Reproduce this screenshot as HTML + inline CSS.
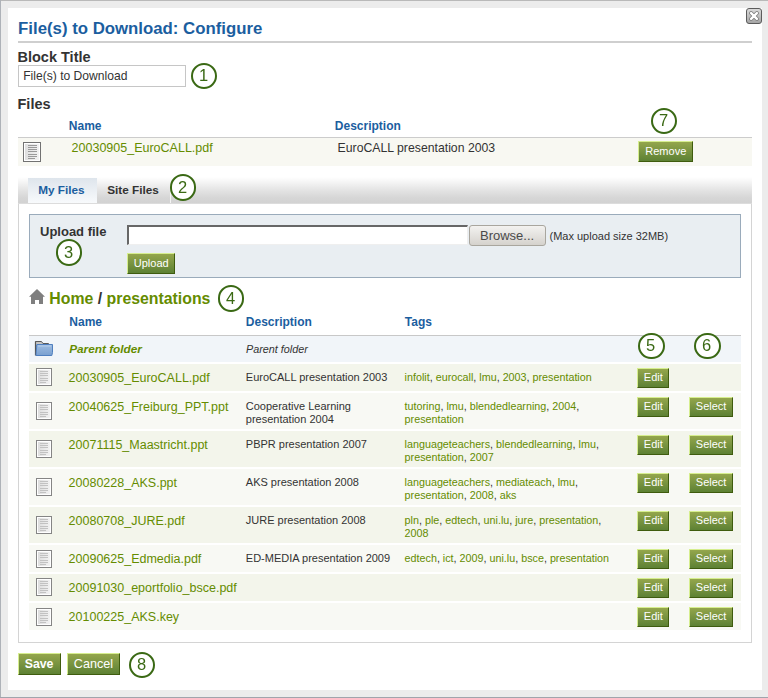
<!DOCTYPE html>
<html><head><meta charset="utf-8"><style>
html,body{margin:0;padding:0}
body{width:768px;height:698px;position:relative;overflow:hidden;background:#ececec;font-family:"Liberation Sans",sans-serif}
.t{position:absolute;white-space:nowrap}
.r{position:absolute}
.btn{position:absolute;border-style:solid;border-width:1px;border-color:#d6ee8e #3f5c0e #3f5c0e #d6ee8e;background:linear-gradient(#94a64c,#5d8134)}
.circ{position:absolute;border:2px solid #3a6914;border-radius:50%;background:#fff}
.browse{position:absolute;border:1px solid #a9a69e;border-radius:3px;background:linear-gradient(#f3f2f0,#d5d2cd)}
</style></head><body>
<div class="r" style="left:8px;top:8px;width:754px;height:682px;background:#fff"></div>
<div class="r" style="left:0px;top:0px;width:768px;height:1px;background:#b9b9b9"></div>
<div class="r" style="left:0px;top:0px;width:1px;height:698px;background:#aeb2b8"></div>
<div class="r" style="left:0px;top:697px;width:768px;height:1px;background:#a0a4ac"></div>
<svg class="r" style="left:746px;top:8px" width="16" height="16" viewBox="0 0 16 16">
<defs><linearGradient id="cg" x1="0" y1="0" x2="0" y2="1"><stop offset="0" stop-color="#dcdcdc"/><stop offset="1" stop-color="#a4a4a4"/></linearGradient></defs>
<rect x="0.5" y="0.5" width="15" height="15" rx="2.5" fill="url(#cg)" stroke="#5c5c5c" stroke-width="1"/>
<path d="M5.1 5.1 L10.9 10.9 M10.9 5.1 L5.1 10.9" stroke="#7a7a7a" stroke-width="4.0" stroke-linecap="round"/>
<path d="M5.1 5.1 L10.9 10.9 M10.9 5.1 L5.1 10.9" stroke="#fff" stroke-width="2.4" stroke-linecap="round"/>
</svg>
<div class="t" style="left:18.10px;top:21.38px;font-size:16.8px;line-height:16.8px;font-weight:bold;font-style:normal;color:#1b5e9f;">File(s) to Download: Configure</div>
<div class="r" style="left:18px;top:41px;width:734px;height:2px;background:#cfcfcf"></div>
<div class="t" style="left:17.50px;top:49.72px;font-size:14.5px;line-height:14.5px;font-weight:bold;font-style:normal;color:#333;">Block Title</div>
<div class="r" style="left:18px;top:65px;width:168px;height:22px;border:1px solid #c6c6c6;box-sizing:border-box;background:#fff"></div>
<div class="t" style="left:23.20px;top:69.95px;font-size:12.1px;line-height:12.1px;font-weight:normal;font-style:normal;color:#333;">File(s) to Download</div>
<div class="circ" style="left:190.60px;top:62.50px;width:22.60px;height:22.60px;"></div>
<div class="t" style="left:198.60px;top:66.93px;font-size:16.5px;line-height:16.5px;font-weight:normal;font-style:normal;color:#3a6914;will-change:transform;">1</div>
<div class="t" style="left:17.50px;top:96.52px;font-size:14.5px;line-height:14.5px;font-weight:bold;font-style:normal;color:#333;">Files</div>
<div class="t" style="left:68.80px;top:120.04px;font-size:12px;line-height:12px;font-weight:bold;font-style:normal;color:#1b5e9f;">Name</div>
<div class="t" style="left:334.80px;top:120.04px;font-size:12px;line-height:12px;font-weight:bold;font-style:normal;color:#1b5e9f;">Description</div>
<div class="circ" style="left:650.60px;top:107.50px;width:22.60px;height:22.60px;"></div>
<div class="t" style="left:658.60px;top:111.93px;font-size:16.5px;line-height:16.5px;font-weight:normal;font-style:normal;color:#3a6914;will-change:transform;">7</div>
<div class="r" style="left:18px;top:137px;width:734px;height:1px;background:#cccccc"></div>
<div class="r" style="left:18px;top:138px;width:734px;height:28px;background:#f8f8f2"></div>
<svg class="r" style="left:23px;top:142px" width="18" height="20" viewBox="0 0 18 20">
<defs><linearGradient id="fg23142" x1="0" y1="0" x2="1" y2="0"><stop offset="0" stop-color="#dedede"/><stop offset="1" stop-color="#f2f2f2"/></linearGradient></defs>
<rect x="0.5" y="0.5" width="17" height="19" fill="#fff" stroke="#727272"/>
<rect x="2" y="2" width="14" height="16" fill="url(#fg23142)"/>
<rect x="5" y="3" width="9" height="1" fill="#9a9a9a"/><rect x="5" y="5" width="9" height="1" fill="#9a9a9a"/><rect x="5" y="7" width="9" height="1" fill="#9a9a9a"/><rect x="5" y="9" width="9" height="1" fill="#9a9a9a"/><rect x="5" y="12" width="9" height="1" fill="#9a9a9a"/><rect x="5" y="14" width="9" height="1" fill="#9a9a9a"/><rect x="5" y="16" width="7" height="1" fill="#9a9a9a"/></svg>
<div class="t" style="left:71.60px;top:142.12px;font-size:12.5px;line-height:12.5px;font-weight:normal;font-style:normal;color:#658c00;">20030905_EuroCALL.pdf</div>
<div class="t" style="left:337.60px;top:142.03px;font-size:12.25px;line-height:12.25px;font-weight:normal;font-style:normal;color:#333;">EuroCALL presentation 2003</div>
<div class="btn" style="left:638px;top:141px;width:53px;height:19px;"></div>
<div class="t" style="left:645.30px;top:146.29px;font-size:11px;line-height:11px;font-weight:normal;font-style:normal;color:#fff;">Remove</div>
<div class="r" style="left:18px;top:177px;width:734px;height:26px;background:linear-gradient(#fff 0%,#f9f9f9 12%,#e4e4e4 50%,#d6d6d6 80%,#d2d2d2 100%)"></div>
<div class="r" style="left:18px;top:203px;width:734px;height:1px;background:#dcdcdc"></div>
<div class="r" style="left:28px;top:178px;width:69px;height:25px;background:linear-gradient(#dee5ec,#f8fafc)"></div>
<div class="r" style="left:170px;top:182px;width:1px;height:21px;background:#f4f4f4"></div>
<div class="t" style="left:38.20px;top:183.85px;font-size:11.75px;line-height:11.75px;font-weight:bold;font-style:normal;color:#1b5e9f;">My Files</div>
<div class="t" style="left:107.20px;top:183.85px;font-size:11.75px;line-height:11.75px;font-weight:bold;font-style:normal;color:#333;">Site Files</div>
<div class="circ" style="left:169.60px;top:174.40px;width:22.60px;height:22.60px;"></div>
<div class="t" style="left:177.60px;top:178.83px;font-size:16.5px;line-height:16.5px;font-weight:normal;font-style:normal;color:#3a6914;will-change:transform;">2</div>
<div class="r" style="left:18px;top:204px;width:734px;height:439px;border:1px solid #d4d4d4;border-top:none;box-sizing:border-box;border-width:0 1.5px 1.5px 1px"></div>
<div class="r" style="left:29px;top:214px;width:712px;height:64px;background:#e9eef2;border:1px solid #9aabbb;box-sizing:border-box"></div>
<div class="t" style="left:40.00px;top:225.39px;font-size:13px;line-height:13px;font-weight:bold;font-style:normal;color:#333;">Upload file</div>
<div class="circ" style="left:55.60px;top:239.40px;width:22.60px;height:22.60px;"></div>
<div class="t" style="left:63.60px;top:243.83px;font-size:16.5px;line-height:16.5px;font-weight:normal;font-style:normal;color:#3a6914;will-change:transform;">3</div>
<div class="r" style="left:127px;top:225px;width:341px;height:20px;background:#fff;border-style:solid;border-width:2px 1.5px 1.5px 2px;border-color:#676767 #efefef #efefef #676767;box-sizing:border-box"></div>
<div class="browse" style="left:469px;top:225px;width:75px;height:19px;"></div>
<div class="t" style="left:480.00px;top:228.99px;font-size:13px;line-height:13px;font-weight:normal;font-style:normal;color:#4a4a4a;">Browse...</div>
<div class="t" style="left:549.50px;top:230.69px;font-size:11px;line-height:11px;font-weight:normal;font-style:normal;color:#333;">(Max upload size 32MB)</div>
<div class="btn" style="left:127px;top:253px;width:46px;height:19px;"></div>
<div class="t" style="left:133.80px;top:258.09px;font-size:11px;line-height:11px;font-weight:normal;font-style:normal;color:#fff;">Upload</div>
<svg class="r" style="left:28px;top:288px" width="18" height="17" viewBox="0 0 18 17">
<path d="M9 1 L17 8.7 L15 8.7 L15 16 L11 16 L11 12 L7 12 L7 16 L3 16 L3 8.7 L1 8.7 Z" fill="#7f7f7f"/></svg>
<div class="t" style="left:49.30px;top:290.78px;font-size:15.85px;line-height:15.85px;font-weight:bold;font-style:normal;color:#333;"><span style="color:#658c00">Home</span> / <span style="color:#658c00">presentations</span></div>
<div class="circ" style="left:217.60px;top:285.40px;width:22.60px;height:22.60px;"></div>
<div class="t" style="left:225.60px;top:289.83px;font-size:16.5px;line-height:16.5px;font-weight:normal;font-style:normal;color:#3a6914;will-change:transform;">4</div>
<div class="t" style="left:69.30px;top:315.84px;font-size:12px;line-height:12px;font-weight:bold;font-style:normal;color:#1b5e9f;">Name</div>
<div class="t" style="left:245.80px;top:315.84px;font-size:12px;line-height:12px;font-weight:bold;font-style:normal;color:#1b5e9f;">Description</div>
<div class="t" style="left:404.80px;top:315.84px;font-size:12px;line-height:12px;font-weight:bold;font-style:normal;color:#1b5e9f;">Tags</div>
<div class="r" style="left:29px;top:335px;width:712px;height:1px;background:#c8c8c8"></div>
<div class="r" style="left:29px;top:336px;width:712px;height:26px;background:#f1f5f9"></div>
<div class="r" style="left:29px;top:364px;width:712px;height:27px;background:#f3f5eb"></div>
<div class="r" style="left:29px;top:393px;width:712px;height:36px;background:#f8f9f4"></div>
<div class="r" style="left:29px;top:431px;width:712px;height:36px;background:#f3f5eb"></div>
<div class="r" style="left:29px;top:469px;width:712px;height:36px;background:#f8f9f4"></div>
<div class="r" style="left:29px;top:507px;width:712px;height:36px;background:#f3f5eb"></div>
<div class="r" style="left:29px;top:545px;width:712px;height:27px;background:#f8f9f4"></div>
<div class="r" style="left:29px;top:574px;width:712px;height:27px;background:#f3f5eb"></div>
<div class="r" style="left:29px;top:603px;width:712px;height:27px;background:#f8f9f4"></div>
<div class="circ" style="left:638.40px;top:332.50px;width:22.60px;height:22.60px;"></div>
<div class="t" style="left:646.40px;top:336.93px;font-size:16.5px;line-height:16.5px;font-weight:normal;font-style:normal;color:#3a6914;will-change:transform;">5</div>
<div class="circ" style="left:694.40px;top:332.50px;width:22.60px;height:22.60px;"></div>
<div class="t" style="left:702.40px;top:336.93px;font-size:16.5px;line-height:16.5px;font-weight:normal;font-style:normal;color:#3a6914;will-change:transform;">6</div>
<svg class="r" style="left:34px;top:340px" width="20" height="17" viewBox="0 0 20 17">
<defs><linearGradient id="fo" x1="0" y1="0" x2="0" y2="1"><stop offset="0" stop-color="#9dbce0"/><stop offset="1" stop-color="#7aa0d0"/></linearGradient></defs>
<path d="M1.5 1.5 L7.5 1.5 L9 3.5 L14.5 3.5 L14.5 6 L1.5 6 Z" fill="#c4c4c4" stroke="#5a5a5a" stroke-width="1"/>
<path d="M1.5 1.5 L1.5 15.5" stroke="#555" stroke-width="1.2"/>
<path d="M2.8 4.5 L18.5 4.5 L18.5 12.5 L17.8 15.5 L2 15.5 Z" fill="url(#fo)" stroke="#4f7fbf" stroke-width="1"/><path d="M4 6 L17 6" stroke="#b4cdea" stroke-width="1"/>
</svg>
<div class="t" style="left:69.20px;top:343.81px;font-size:11.8px;line-height:11.8px;font-weight:bold;font-style:italic;color:#658c00;">Parent folder</div>
<div class="t" style="left:246.00px;top:343.66px;font-size:10.8px;line-height:10.8px;font-weight:normal;font-style:italic;color:#333;">Parent folder</div>
<svg class="r" style="left:36px;top:368px" width="16" height="18" viewBox="0 0 16 18">
<defs><linearGradient id="fg36368" x1="0" y1="0" x2="1" y2="0"><stop offset="0" stop-color="#dedede"/><stop offset="1" stop-color="#f2f2f2"/></linearGradient></defs>
<rect x="0.5" y="0.5" width="15" height="17" fill="#fff" stroke="#858585"/>
<rect x="2" y="2" width="12" height="14" fill="url(#fg36368)"/>
<rect x="4" y="3" width="8" height="1" fill="#c2c2c2"/><rect x="4" y="5" width="8" height="1" fill="#c2c2c2"/><rect x="4" y="7" width="8" height="1" fill="#c2c2c2"/><rect x="4" y="10" width="8" height="1" fill="#c2c2c2"/><rect x="4" y="12" width="8" height="1" fill="#c2c2c2"/><rect x="4" y="14" width="6" height="1" fill="#c2c2c2"/></svg>
<div class="t" style="left:68.60px;top:372.12px;font-size:12.5px;line-height:12.5px;font-weight:normal;font-style:normal;color:#658c00;">20030905_EuroCALL.pdf</div>
<div class="t" style="left:245.80px;top:371.89px;font-size:11px;line-height:11px;font-weight:normal;font-style:normal;color:#333;">EuroCALL presentation 2003</div>
<div class="t" style="left:404.60px;top:372.10px;font-size:10.75px;line-height:10.75px;font-weight:normal;font-style:normal;color:#333;"><span style="color:#658c00">infolit</span>, <span style="color:#658c00">eurocall</span>, <span style="color:#658c00">lmu</span>, <span style="color:#658c00">2003</span>, <span style="color:#658c00">presentation</span></div>
<div class="btn" style="left:637px;top:367.5px;width:30px;height:18.5px;"></div>
<div class="t" style="left:643.80px;top:372.19px;font-size:11px;line-height:11px;font-weight:normal;font-style:normal;color:#fff;">Edit</div>
<svg class="r" style="left:36px;top:402px" width="16" height="18" viewBox="0 0 16 18">
<defs><linearGradient id="fg36402" x1="0" y1="0" x2="1" y2="0"><stop offset="0" stop-color="#dedede"/><stop offset="1" stop-color="#f2f2f2"/></linearGradient></defs>
<rect x="0.5" y="0.5" width="15" height="17" fill="#fff" stroke="#858585"/>
<rect x="2" y="2" width="12" height="14" fill="url(#fg36402)"/>
<rect x="4" y="3" width="8" height="1" fill="#c2c2c2"/><rect x="4" y="5" width="8" height="1" fill="#c2c2c2"/><rect x="4" y="7" width="8" height="1" fill="#c2c2c2"/><rect x="4" y="10" width="8" height="1" fill="#c2c2c2"/><rect x="4" y="12" width="8" height="1" fill="#c2c2c2"/><rect x="4" y="14" width="6" height="1" fill="#c2c2c2"/></svg>
<div class="t" style="left:68.60px;top:401.12px;font-size:12.5px;line-height:12.5px;font-weight:normal;font-style:normal;color:#658c00;">20040625_Freiburg_PPT.ppt</div>
<div class="t" style="left:245.80px;top:400.89px;font-size:11px;line-height:11px;font-weight:normal;font-style:normal;color:#333;">Cooperative Learning</div>
<div class="t" style="left:245.80px;top:413.89px;font-size:11px;line-height:11px;font-weight:normal;font-style:normal;color:#333;">presentation 2004</div>
<div class="t" style="left:404.60px;top:401.10px;font-size:10.75px;line-height:10.75px;font-weight:normal;font-style:normal;color:#333;"><span style="color:#658c00">tutoring</span>, <span style="color:#658c00">lmu</span>, <span style="color:#658c00">blendedlearning</span>, <span style="color:#658c00">2004</span>,</div>
<div class="t" style="left:404.60px;top:414.10px;font-size:10.75px;line-height:10.75px;font-weight:normal;font-style:normal;color:#333;"><span style="color:#658c00">presentation</span></div>
<div class="btn" style="left:637px;top:396.5px;width:30px;height:18.5px;"></div>
<div class="t" style="left:643.80px;top:401.19px;font-size:11px;line-height:11px;font-weight:normal;font-style:normal;color:#fff;">Edit</div>
<div class="btn" style="left:689px;top:396.5px;width:42px;height:18.5px;"></div>
<div class="t" style="left:695.80px;top:401.19px;font-size:11px;line-height:11px;font-weight:normal;font-style:normal;color:#fff;">Select</div>
<svg class="r" style="left:36px;top:440px" width="16" height="18" viewBox="0 0 16 18">
<defs><linearGradient id="fg36440" x1="0" y1="0" x2="1" y2="0"><stop offset="0" stop-color="#dedede"/><stop offset="1" stop-color="#f2f2f2"/></linearGradient></defs>
<rect x="0.5" y="0.5" width="15" height="17" fill="#fff" stroke="#858585"/>
<rect x="2" y="2" width="12" height="14" fill="url(#fg36440)"/>
<rect x="4" y="3" width="8" height="1" fill="#c2c2c2"/><rect x="4" y="5" width="8" height="1" fill="#c2c2c2"/><rect x="4" y="7" width="8" height="1" fill="#c2c2c2"/><rect x="4" y="10" width="8" height="1" fill="#c2c2c2"/><rect x="4" y="12" width="8" height="1" fill="#c2c2c2"/><rect x="4" y="14" width="6" height="1" fill="#c2c2c2"/></svg>
<div class="t" style="left:68.60px;top:439.12px;font-size:12.5px;line-height:12.5px;font-weight:normal;font-style:normal;color:#658c00;">20071115_Maastricht.ppt</div>
<div class="t" style="left:245.80px;top:438.89px;font-size:11px;line-height:11px;font-weight:normal;font-style:normal;color:#333;">PBPR presentation 2007</div>
<div class="t" style="left:404.60px;top:439.10px;font-size:10.75px;line-height:10.75px;font-weight:normal;font-style:normal;color:#333;"><span style="color:#658c00">languageteachers</span>, <span style="color:#658c00">blendedlearning</span>, <span style="color:#658c00">lmu</span>,</div>
<div class="t" style="left:404.60px;top:452.10px;font-size:10.75px;line-height:10.75px;font-weight:normal;font-style:normal;color:#333;"><span style="color:#658c00">presentation</span>, <span style="color:#658c00">2007</span></div>
<div class="btn" style="left:637px;top:434.5px;width:30px;height:18.5px;"></div>
<div class="t" style="left:643.80px;top:439.19px;font-size:11px;line-height:11px;font-weight:normal;font-style:normal;color:#fff;">Edit</div>
<div class="btn" style="left:689px;top:434.5px;width:42px;height:18.5px;"></div>
<div class="t" style="left:695.80px;top:439.19px;font-size:11px;line-height:11px;font-weight:normal;font-style:normal;color:#fff;">Select</div>
<svg class="r" style="left:36px;top:478px" width="16" height="18" viewBox="0 0 16 18">
<defs><linearGradient id="fg36478" x1="0" y1="0" x2="1" y2="0"><stop offset="0" stop-color="#dedede"/><stop offset="1" stop-color="#f2f2f2"/></linearGradient></defs>
<rect x="0.5" y="0.5" width="15" height="17" fill="#fff" stroke="#858585"/>
<rect x="2" y="2" width="12" height="14" fill="url(#fg36478)"/>
<rect x="4" y="3" width="8" height="1" fill="#c2c2c2"/><rect x="4" y="5" width="8" height="1" fill="#c2c2c2"/><rect x="4" y="7" width="8" height="1" fill="#c2c2c2"/><rect x="4" y="10" width="8" height="1" fill="#c2c2c2"/><rect x="4" y="12" width="8" height="1" fill="#c2c2c2"/><rect x="4" y="14" width="6" height="1" fill="#c2c2c2"/></svg>
<div class="t" style="left:68.60px;top:477.12px;font-size:12.5px;line-height:12.5px;font-weight:normal;font-style:normal;color:#658c00;">20080228_AKS.ppt</div>
<div class="t" style="left:245.80px;top:476.89px;font-size:11px;line-height:11px;font-weight:normal;font-style:normal;color:#333;">AKS presentation 2008</div>
<div class="t" style="left:404.60px;top:477.10px;font-size:10.75px;line-height:10.75px;font-weight:normal;font-style:normal;color:#333;"><span style="color:#658c00">languageteachers</span>, <span style="color:#658c00">mediateach</span>, <span style="color:#658c00">lmu</span>,</div>
<div class="t" style="left:404.60px;top:490.10px;font-size:10.75px;line-height:10.75px;font-weight:normal;font-style:normal;color:#333;"><span style="color:#658c00">presentation</span>, <span style="color:#658c00">2008</span>, <span style="color:#658c00">aks</span></div>
<div class="btn" style="left:637px;top:472.5px;width:30px;height:18.5px;"></div>
<div class="t" style="left:643.80px;top:477.19px;font-size:11px;line-height:11px;font-weight:normal;font-style:normal;color:#fff;">Edit</div>
<div class="btn" style="left:689px;top:472.5px;width:42px;height:18.5px;"></div>
<div class="t" style="left:695.80px;top:477.19px;font-size:11px;line-height:11px;font-weight:normal;font-style:normal;color:#fff;">Select</div>
<svg class="r" style="left:36px;top:516px" width="16" height="18" viewBox="0 0 16 18">
<defs><linearGradient id="fg36516" x1="0" y1="0" x2="1" y2="0"><stop offset="0" stop-color="#dedede"/><stop offset="1" stop-color="#f2f2f2"/></linearGradient></defs>
<rect x="0.5" y="0.5" width="15" height="17" fill="#fff" stroke="#858585"/>
<rect x="2" y="2" width="12" height="14" fill="url(#fg36516)"/>
<rect x="4" y="3" width="8" height="1" fill="#c2c2c2"/><rect x="4" y="5" width="8" height="1" fill="#c2c2c2"/><rect x="4" y="7" width="8" height="1" fill="#c2c2c2"/><rect x="4" y="10" width="8" height="1" fill="#c2c2c2"/><rect x="4" y="12" width="8" height="1" fill="#c2c2c2"/><rect x="4" y="14" width="6" height="1" fill="#c2c2c2"/></svg>
<div class="t" style="left:68.60px;top:515.12px;font-size:12.5px;line-height:12.5px;font-weight:normal;font-style:normal;color:#658c00;">20080708_JURE.pdf</div>
<div class="t" style="left:245.80px;top:514.89px;font-size:11px;line-height:11px;font-weight:normal;font-style:normal;color:#333;">JURE presentation 2008</div>
<div class="t" style="left:404.60px;top:515.10px;font-size:10.75px;line-height:10.75px;font-weight:normal;font-style:normal;color:#333;"><span style="color:#658c00">pln</span>, <span style="color:#658c00">ple</span>, <span style="color:#658c00">edtech</span>, <span style="color:#658c00">uni.lu</span>, <span style="color:#658c00">jure</span>, <span style="color:#658c00">presentation</span>,</div>
<div class="t" style="left:404.60px;top:528.10px;font-size:10.75px;line-height:10.75px;font-weight:normal;font-style:normal;color:#333;"><span style="color:#658c00">2008</span></div>
<div class="btn" style="left:637px;top:510.5px;width:30px;height:18.5px;"></div>
<div class="t" style="left:643.80px;top:515.19px;font-size:11px;line-height:11px;font-weight:normal;font-style:normal;color:#fff;">Edit</div>
<div class="btn" style="left:689px;top:510.5px;width:42px;height:18.5px;"></div>
<div class="t" style="left:695.80px;top:515.19px;font-size:11px;line-height:11px;font-weight:normal;font-style:normal;color:#fff;">Select</div>
<svg class="r" style="left:36px;top:550px" width="16" height="18" viewBox="0 0 16 18">
<defs><linearGradient id="fg36550" x1="0" y1="0" x2="1" y2="0"><stop offset="0" stop-color="#dedede"/><stop offset="1" stop-color="#f2f2f2"/></linearGradient></defs>
<rect x="0.5" y="0.5" width="15" height="17" fill="#fff" stroke="#858585"/>
<rect x="2" y="2" width="12" height="14" fill="url(#fg36550)"/>
<rect x="4" y="3" width="8" height="1" fill="#c2c2c2"/><rect x="4" y="5" width="8" height="1" fill="#c2c2c2"/><rect x="4" y="7" width="8" height="1" fill="#c2c2c2"/><rect x="4" y="10" width="8" height="1" fill="#c2c2c2"/><rect x="4" y="12" width="8" height="1" fill="#c2c2c2"/><rect x="4" y="14" width="6" height="1" fill="#c2c2c2"/></svg>
<div class="t" style="left:68.60px;top:553.12px;font-size:12.5px;line-height:12.5px;font-weight:normal;font-style:normal;color:#658c00;">20090625_Edmedia.pdf</div>
<div class="t" style="left:245.80px;top:552.89px;font-size:11px;line-height:11px;font-weight:normal;font-style:normal;color:#333;">ED-MEDIA presentation 2009</div>
<div class="t" style="left:404.60px;top:553.10px;font-size:10.75px;line-height:10.75px;font-weight:normal;font-style:normal;color:#333;"><span style="color:#658c00">edtech</span>, <span style="color:#658c00">ict</span>, <span style="color:#658c00">2009</span>, <span style="color:#658c00">uni.lu</span>, <span style="color:#658c00">bsce</span>, <span style="color:#658c00">presentation</span></div>
<div class="btn" style="left:637px;top:548.5px;width:30px;height:18.5px;"></div>
<div class="t" style="left:643.80px;top:553.19px;font-size:11px;line-height:11px;font-weight:normal;font-style:normal;color:#fff;">Edit</div>
<div class="btn" style="left:689px;top:548.5px;width:42px;height:18.5px;"></div>
<div class="t" style="left:695.80px;top:553.19px;font-size:11px;line-height:11px;font-weight:normal;font-style:normal;color:#fff;">Select</div>
<svg class="r" style="left:36px;top:578px" width="16" height="18" viewBox="0 0 16 18">
<defs><linearGradient id="fg36578" x1="0" y1="0" x2="1" y2="0"><stop offset="0" stop-color="#dedede"/><stop offset="1" stop-color="#f2f2f2"/></linearGradient></defs>
<rect x="0.5" y="0.5" width="15" height="17" fill="#fff" stroke="#858585"/>
<rect x="2" y="2" width="12" height="14" fill="url(#fg36578)"/>
<rect x="4" y="3" width="8" height="1" fill="#c2c2c2"/><rect x="4" y="5" width="8" height="1" fill="#c2c2c2"/><rect x="4" y="7" width="8" height="1" fill="#c2c2c2"/><rect x="4" y="10" width="8" height="1" fill="#c2c2c2"/><rect x="4" y="12" width="8" height="1" fill="#c2c2c2"/><rect x="4" y="14" width="6" height="1" fill="#c2c2c2"/></svg>
<div class="t" style="left:68.60px;top:582.12px;font-size:12.5px;line-height:12.5px;font-weight:normal;font-style:normal;color:#658c00;">20091030_eportfolio_bsce.pdf</div>
<div class="btn" style="left:637px;top:577.5px;width:30px;height:18.5px;"></div>
<div class="t" style="left:643.80px;top:582.19px;font-size:11px;line-height:11px;font-weight:normal;font-style:normal;color:#fff;">Edit</div>
<div class="btn" style="left:689px;top:577.5px;width:42px;height:18.5px;"></div>
<div class="t" style="left:695.80px;top:582.19px;font-size:11px;line-height:11px;font-weight:normal;font-style:normal;color:#fff;">Select</div>
<svg class="r" style="left:36px;top:608px" width="16" height="18" viewBox="0 0 16 18">
<defs><linearGradient id="fg36608" x1="0" y1="0" x2="1" y2="0"><stop offset="0" stop-color="#dedede"/><stop offset="1" stop-color="#f2f2f2"/></linearGradient></defs>
<rect x="0.5" y="0.5" width="15" height="17" fill="#fff" stroke="#858585"/>
<rect x="2" y="2" width="12" height="14" fill="url(#fg36608)"/>
<rect x="4" y="3" width="8" height="1" fill="#c2c2c2"/><rect x="4" y="5" width="8" height="1" fill="#c2c2c2"/><rect x="4" y="7" width="8" height="1" fill="#c2c2c2"/><rect x="4" y="10" width="8" height="1" fill="#c2c2c2"/><rect x="4" y="12" width="8" height="1" fill="#c2c2c2"/><rect x="4" y="14" width="6" height="1" fill="#c2c2c2"/></svg>
<div class="t" style="left:68.60px;top:611.12px;font-size:12.5px;line-height:12.5px;font-weight:normal;font-style:normal;color:#658c00;">20100225_AKS.key</div>
<div class="btn" style="left:637px;top:606.5px;width:30px;height:18.5px;"></div>
<div class="t" style="left:643.80px;top:611.19px;font-size:11px;line-height:11px;font-weight:normal;font-style:normal;color:#fff;">Edit</div>
<div class="btn" style="left:689px;top:606.5px;width:42px;height:18.5px;"></div>
<div class="t" style="left:695.80px;top:611.19px;font-size:11px;line-height:11px;font-weight:normal;font-style:normal;color:#fff;">Select</div>
<div class="btn" style="left:18px;top:653px;width:41px;height:20px;"></div>
<div class="t" style="left:24.70px;top:658.49px;font-size:12.3px;line-height:12.3px;font-weight:bold;font-style:normal;color:#fff;">Save</div>
<div class="btn" style="left:67px;top:653px;width:51px;height:20px;"></div>
<div class="t" style="left:73.80px;top:658.23px;font-size:12.6px;line-height:12.6px;font-weight:normal;font-style:normal;color:#fff;">Cancel</div>
<div class="circ" style="left:128.70px;top:651.50px;width:22.60px;height:22.60px;"></div>
<div class="t" style="left:136.70px;top:655.93px;font-size:16.5px;line-height:16.5px;font-weight:normal;font-style:normal;color:#3a6914;will-change:transform;">8</div>
</body></html>
